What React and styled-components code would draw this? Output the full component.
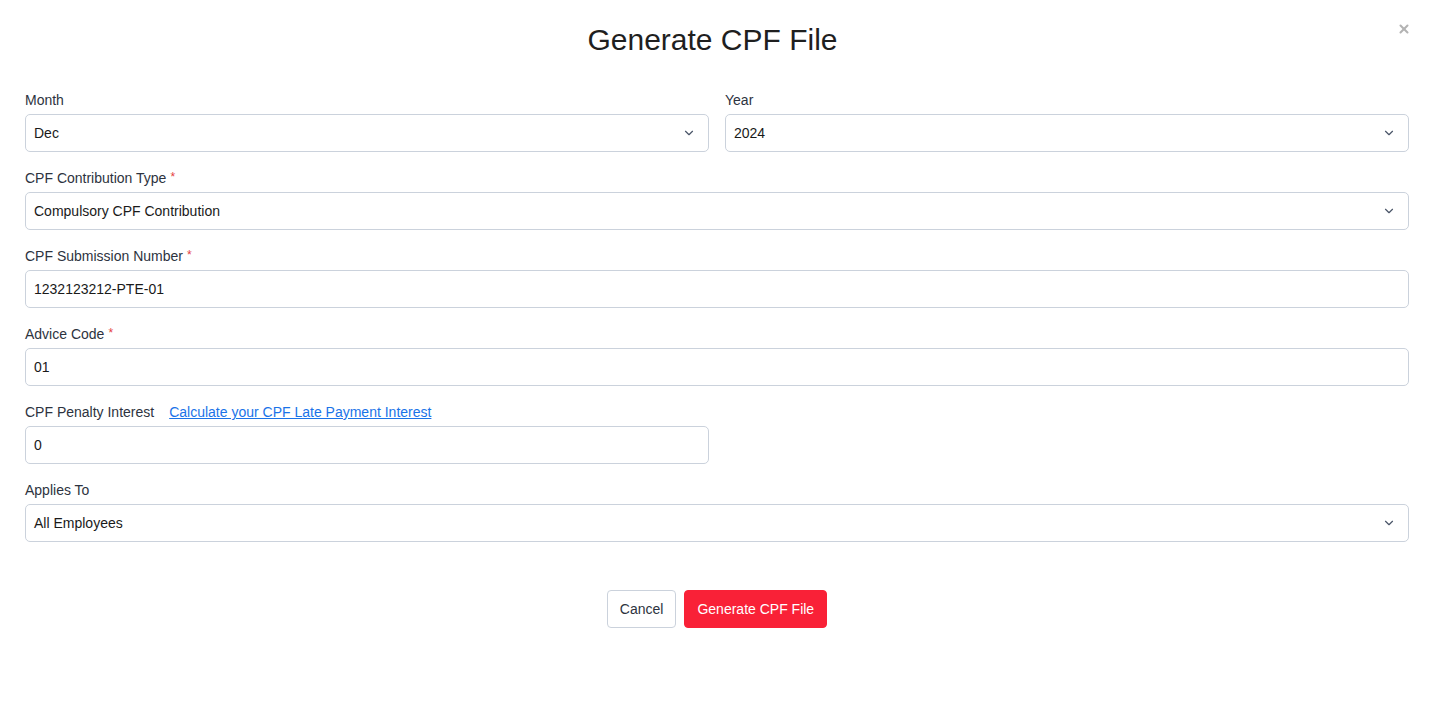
import styled, { createGlobalStyle } from "styled-components";
import { ChevronDown, X } from "lucide-react";

const GlobalStyle = createGlobalStyle`
  body {
    margin: 0;
    background: #ffffff;
    font-family: "Liberation Sans", Arial, sans-serif;
    color: #212529;
  }
  * { box-sizing: border-box; }
`;

const Modal = styled("div")`
  position: relative;
  width: 1431px;
  min-height: 720px;
  padding: 20px 22px 40px 25px;
`;

const Title = styled("h2")`
  margin: 0 0 30px;
  padding-right: 9px;
  text-align: center;
  font-size: 30px;
  font-weight: 400;
  line-height: 40px;
  color: #1f1f1f;
`;

const Close = styled("button")`
  position: absolute;
  top: 22px;
  right: 20px;
  padding: 0;
  border: none;
  background: none;
  color: #b3b3b3;
  display: flex;
  cursor: pointer;
`;

const Form = styled("div")`
  display: flex;
  flex-direction: column;
  gap: 16px;
`;

const Row = styled("div")`
  display: grid;
  grid-template-columns: 1fr 1fr;
  gap: 16px;
`;

const Field = styled("div")`
  display: flex;
  flex-direction: column;
  gap: 4px;
  width: ${({ half }) => (half ? "calc(50% - 8px)" : "auto")};
`;

const LabelRow = styled("div")`
  display: flex;
  align-items: center;
  gap: 15px;
  height: 20px;
`;

const Label = styled("label")`
  font-size: 14px;
  color: #2d3340;
`;

const Star = styled("span")`
  color: #e53e3e;
  margin-left: 4px;
  font-size: 12px;
  vertical-align: top;
`;

const Link = styled("a")`
  font-size: 14px;
  color: #1a73e8;
  text-decoration: underline;
  cursor: pointer;
`;

const Box = styled("div")`
  position: relative;
  display: flex;
  align-items: center;
  height: 38px;
  padding: 0 12px 0 8px;
  border: 1px solid #cbd2dc;
  border-radius: 5px;
  font-size: 14px;
  color: #1a1a1a;
  background: #fff;
`;

const Value = styled("span")`
  flex: 1;
`;

const Chevron = styled(ChevronDown)`
  color: #4a5568;
`;

const Footer = styled("div")`
  display: flex;
  justify-content: center;
  gap: 8px;
  margin-top: 48px;
`;

const Button = styled("button")`
  height: 38px;
  padding: 0 12px;
  font-family: inherit;
  font-size: 14px;
  border-radius: 4px;
  cursor: pointer;
  border: 1px solid ${({ primary }) => (primary ? "#f92137" : "#cbd2dc")};
  background: ${({ primary }) => (primary ? "#f92137" : "#ffffff")};
  color: ${({ primary }) => (primary ? "#ffffff" : "#2d3340")};
`;

const SelectBox = ({ value }) => (
  <Box>
    <Value>{value}</Value>
    <Chevron size={14} strokeWidth={2} />
  </Box>
);

const InputBox = ({ value }) => (
  <Box>
    <Value>{value}</Value>
  </Box>
);

const App = () => {
  return (
    <>
      <GlobalStyle />
      <Modal>
        <Close>
          <X size={14} strokeWidth={3.5} />
        </Close>
        <Title>Generate CPF File</Title>
        <Form>
          <Row>
            <Field>
              <LabelRow>
                <Label>Month</Label>
              </LabelRow>
              <SelectBox value="Dec" />
            </Field>
            <Field>
              <LabelRow>
                <Label>Year</Label>
              </LabelRow>
              <SelectBox value="2024" />
            </Field>
          </Row>
          <Field>
            <LabelRow>
              <Label>
                CPF Contribution Type<Star>*</Star>
              </Label>
            </LabelRow>
            <SelectBox value="Compulsory CPF Contribution" />
          </Field>
          <Field>
            <LabelRow>
              <Label>
                CPF Submission Number<Star>*</Star>
              </Label>
            </LabelRow>
            <InputBox value="1232123212-PTE-01" />
          </Field>
          <Field>
            <LabelRow>
              <Label>
                Advice Code<Star>*</Star>
              </Label>
            </LabelRow>
            <InputBox value="01" />
          </Field>
          <Field half>
            <LabelRow>
              <Label>CPF Penalty Interest</Label>
              <Link>Calculate your CPF Late Payment Interest</Link>
            </LabelRow>
            <InputBox value="0" />
          </Field>
          <Field>
            <LabelRow>
              <Label>Applies To</Label>
            </LabelRow>
            <SelectBox value="All Employees" />
          </Field>
        </Form>
        <Footer>
          <Button>Cancel</Button>
          <Button primary>Generate CPF File</Button>
        </Footer>
      </Modal>
    </>
  );
};

export default App;
